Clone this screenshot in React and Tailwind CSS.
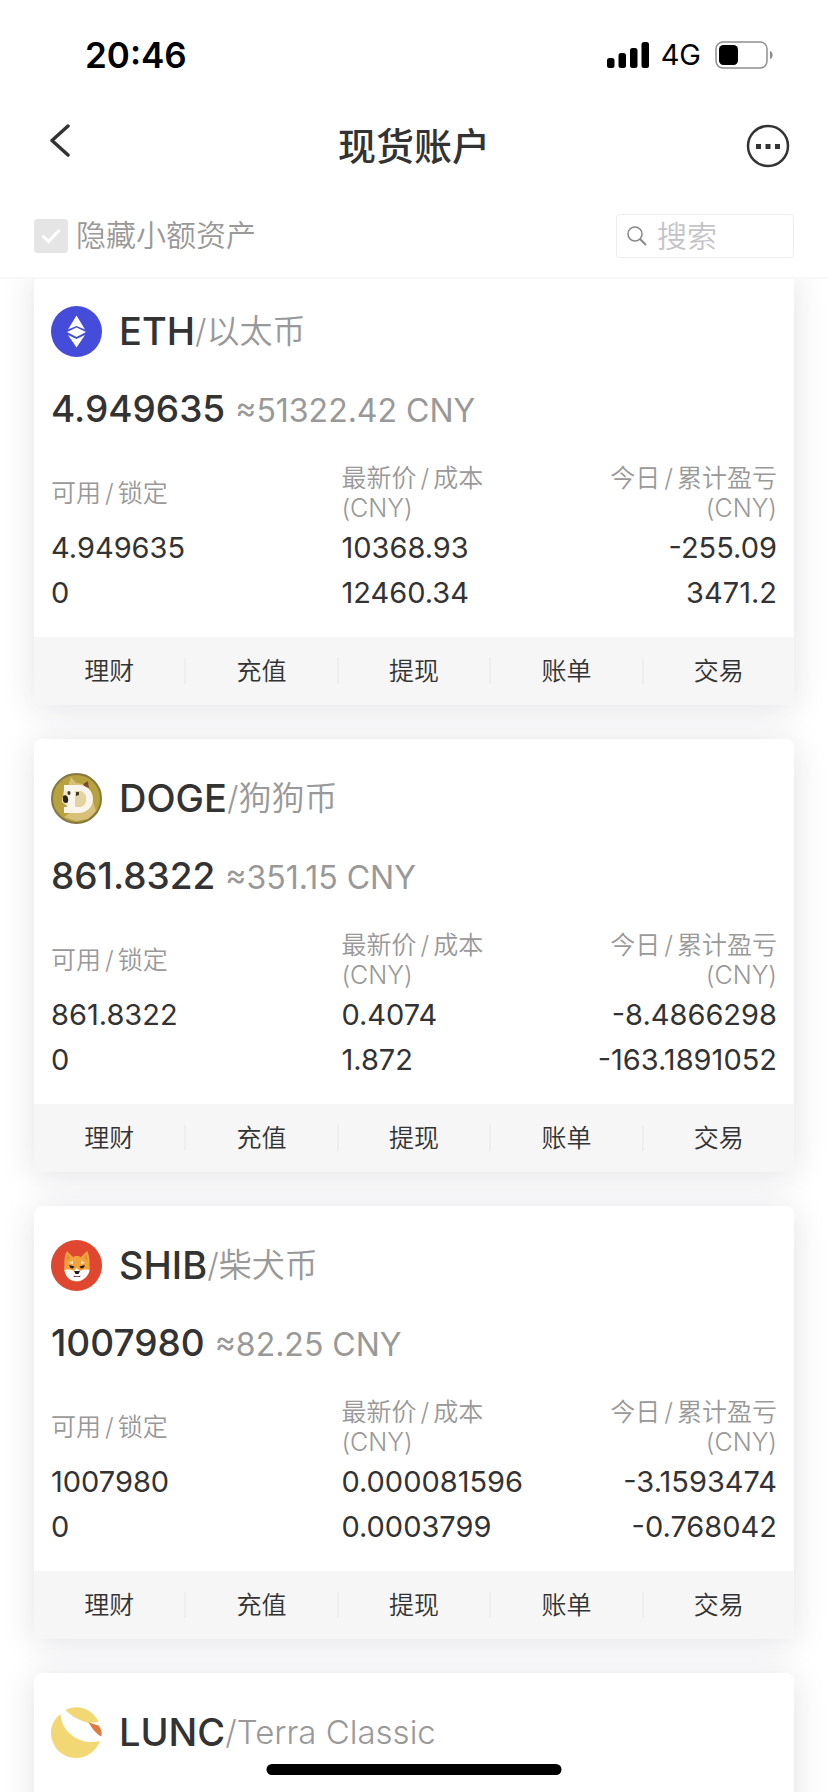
import { useState } from "react";

const coins = [
  {
    symbol: "ETH",
    name: "以太币",
    amount: "4.949635",
    worth: "51322.42",
    rows: [
      ["4.949635", "10368.93", "-255.09"],
      ["0", "12460.34", "3471.2"],
    ],
  },
  {
    symbol: "DOGE",
    name: "狗狗币",
    amount: "861.8322",
    worth: "351.15",
    rows: [
      ["861.8322", "0.4074", "-8.4866298"],
      ["0", "1.872", "-163.1891052"],
    ],
  },
  {
    symbol: "SHIB",
    name: "柴犬币",
    amount: "1007980",
    worth: "82.25",
    rows: [
      ["1007980", "0.000081596", "-3.1593474"],
      ["0", "0.0003799", "-0.768042"],
    ],
  },
  { symbol: "LUNC", name: "Terra Classic" },
];

const actions = ["理财", "充值", "提现", "账单", "交易"];

function EthIcon() {
  return (
    <svg viewBox="0 0 51 51" className="size-[51px]" aria-hidden="true">
      <circle cx="25.5" cy="25.5" r="25.5" fill="#444cd9" />
      <path d="M25.5 9.500 34 23.500 25.500 20 17 23.500Z" fill="#fff" />
      <path d="M25.5 21.500 35 26 25.500 31 16 26Z" fill="#fff" />
      <path d="M17 29 25.500 33 34 29 25.500 41.500Z" fill="#fff" />
    </svg>
  );
}

function DogeIcon() {
  return (
    <svg viewBox="0 0 51 51" className="size-[51px]" aria-hidden="true">
      <circle cx="25.5" cy="25.5" r="24.5" fill="#b8a23f" stroke="#84783f" strokeWidth="2" />
      <path d="M17 13 20 4 25 10 32 11 37 8 38 17 42 28 45 38 37 46 25 48 13 44 20 39Z" fill="#d8c078" />
      <path d="M32 11 37 8 38 15 34 14Z" fill="#7a4a2c" />
      <path d="M13 17 18 12 27 12V40H14L16 33 11 29Z" fill="#f0e6cf" />
      {/* letter-shaped coin mark */}
      <path
        fillRule="evenodd"
        d="M13 12H27C36 12 42 18 42 26S36 40 27 40H13V34H17V18H13ZM24 18V34H27C32 34 35 31 35 26S32 18 27 18Z"
        fill="#f9f5ea"
      />
      <path d="M24 18H27C32 18 35 21 35 26S32 34 27 34H24Z" fill="#e2d3a2" />
      <path d="M12 23C15 21 18 24 17 29 15 31 12 30 12 27Z" fill="#2c2419" />
      <ellipse cx="18" cy="20" rx="1.500" ry="2" fill="#3d301d" />
      <path d="M25 19H28V22L25 23Z" fill="#4a3b22" />
    </svg>
  );
}

function ShibIcon() {
  return (
    <svg viewBox="0 0 51 51" className="size-[51px]" aria-hidden="true">
      <circle cx="25.5" cy="25.5" r="25.5" fill="#df4730" />
      <path d="M16 11 22 17C24 15.500 28 15.500 30 17L36 11C38 14 39 19 38.500 25 40 32 36 37 31 40 28 42 24 42 21 40 15 37 12 32 13.500 25 13 19 14 14 16 11Z" fill="#f2a33c" />
      <path d="M16.500 14 19 18 15.500 21ZM35.500 14 33 18 36.500 21Z" fill="#e58a3c" />
      <path d="M13.500 30C17 29 21 30 23 31L25.500 28 29 31C31 30 35 29 38.500 30 38 35 34 39 30 40.500 27 41.500 24 41.500 21 40.500 17 39 14 35 13.500 30Z" fill="#fff" />
      <path d="M18 23 22 20.500 22 24ZM34 23 30 20.500 30 24Z" fill="#fdeccb" />
      <path d="M18 25 23.500 26.500 22 28.500 19.500 28ZM34 25 28.500 26.500 30 28.500 32.500 28Z" fill="#241c1a" />
      <path d="M23 31H29L27.500 34H24.500Z" fill="#241c1a" />
      <path d="M22.500 35.500C24 36.500 28 36.500 29.500 35.500L29 37H23Z" fill="#5a2a32" />
    </svg>
  );
}

function LuncIcon() {
  return (
    <svg viewBox="0 0 51 51" className="size-[51px]" aria-hidden="true">
      <path d="M14.500 3C26-3 41 1 47.500 15L38 16C29 14 20 9 14.500 3Z" fill="#f2d875" />
      <path d="M9.500 7C10 19 18 28 27 32 35 36 42 35.500 49 34 45 44 36 51 25.500 51 11 51 0 40 0 25.500 0 18 4 11 9.500 7Z" fill="#f2d875" />
      <path d="M37.500 15.500 47.500 18.500C50.500 22 51 26 50.500 29.500 45 27 41 21 37.500 15.500Z" fill="#e07a3f" />
    </svg>
  );
}

const icons = { ETH: EthIcon, DOGE: DogeIcon, SHIB: ShibIcon, LUNC: LuncIcon };

function StatusBar() {
  return (
    <div className="flex h-[110px] items-center justify-between pr-[55px] pl-[85px] text-black">
      <span className="text-[35px] font-semibold">20:46</span>
      <div className="flex items-center">
        <svg viewBox="0 0 42 26" className="h-[26px] w-[42px]" aria-hidden="true">
          <rect x="0" y="16" width="7.500" height="10" rx="2.500" />
          <rect x="11.500" y="11" width="7.500" height="15" rx="2.500" />
          <rect x="23" y="6" width="7.500" height="20" rx="2.500" />
          <rect x="34.500" y="0" width="7.500" height="26" rx="2.500" />
        </svg>
        <span className="mr-3.5 ml-3 text-[29px]">4G</span>
        <svg viewBox="0 0 58 28" className="h-7 w-[58px]" aria-hidden="true">
          <rect x="1" y="1" width="51" height="26" rx="7" fill="none" stroke="#8e8e8e" strokeWidth="1.500" />
          <rect x="4" y="4" width="19" height="20" rx="4.500" />
          <path d="M55 10C58.500 11 58.500 17 55 18Z" fill="#8e8e8e" />
        </svg>
      </div>
    </div>
  );
}

function PairLabel({ left, right }) {
  return (
    <>
      {left}
      <span className="mx-1">/</span>
      {right}
    </>
  );
}

function CoinCard({ coin }) {
  const Icon = icons[coin.symbol];

  return (
    <section className="rounded-lg bg-white shadow-[0_4px_34px_rgba(30,30,70,0.13)]">
      <div className="px-[17px] pt-[34px] pb-[22px]">
        <h2 className="flex h-[51px] items-center">
          <Icon />
          <span className="ml-[17px] text-[38px] font-medium">{coin.symbol}</span>
          <span className="text-[33px] font-[350] text-[#999]">/{coin.name}</span>
        </h2>

        {coin.rows && (
          <>
            <p className="mt-6 flex h-14 items-baseline gap-2.5 leading-[56px]">
              <span className="text-[37px] font-medium">{coin.amount}</span>
              <span className="text-[32px] text-[#999]">≈{coin.worth} CNY</span>
            </p>

            <table className="mt-[26px] w-full table-fixed">
              <thead className="text-[25px] leading-[30px] text-[#999]">
                <tr>
                  <th className="w-2/5 p-0 pb-0.5 text-left font-[350]">
                    <PairLabel left="可用" right="锁定" />
                  </th>
                  <th className="w-1/4 p-0 pb-0.5 text-left font-[350]">
                    <PairLabel left="最新价" right="成本" />
                    <br />
                    (CNY)
                  </th>
                  <th className="p-0 pb-0.5 text-right font-[350]">
                    <PairLabel left="今日" right="累计盈亏" />
                    <br />
                    (CNY)
                  </th>
                </tr>
              </thead>
              <tbody className="text-[29px] leading-[45px]">
                {coin.rows.map((row, i) => (
                  <tr key={i}>
                    <td className="p-0">{row[0]}</td>
                    <td className="p-0">{row[1]}</td>
                    <td className="p-0 text-right">{row[2]}</td>
                  </tr>
                ))}
              </tbody>
            </table>
          </>
        )}
      </div>

      {coin.rows ? (
        <div className="flex h-[68px] items-center divide-x-2 divide-[#eeeeef] rounded-b-lg bg-[#f6f6f7]">
          {actions.map((label) => (
            <button key={label} type="button" className="h-[26px] flex-1 text-[25px] leading-[26px] font-[350]">
              {label}
            </button>
          ))}
        </div>
      ) : (
        <div className="h-[68px]" />
      )}
    </section>
  );
}

export default function App() {
  const [hideSmall, setHideSmall] = useState(true);
  const [query, setQuery] = useState("");

  const visible = coins.filter((c) =>
    (c.symbol + c.name).toLowerCase().includes(query.toLowerCase())
  );

  return (
    <div className="relative flex h-screen flex-col overflow-hidden bg-white font-[Inter,'Noto_Sans_CJK_SC',sans-serif] text-[#333]">
      <header className="border-b-2 border-[#f8f8fb]">
        <StatusBar />

        {/* nav */}
        <div className="grid h-[72px] grid-cols-[1fr_auto_1fr] items-center px-[38px]">
          <button type="button" aria-label="返回" className="justify-self-start px-3 pb-3">
            <svg viewBox="0 0 20 34" className="h-[34px] w-5" fill="none" stroke="#333" strokeWidth="3.500" strokeLinecap="round" strokeLinejoin="round">
              <path d="M18 3 2 17.500 18 32" />
            </svg>
          </button>
          <h1 className="text-[38px] font-medium">现货账户</h1>
          <button type="button" aria-label="更多" className="justify-self-end">
            <svg viewBox="0 0 44 44" className="size-11" fill="#333">
              <circle cx="22" cy="22" r="20" fill="none" stroke="#333" strokeWidth="2.500" />
              <rect x="10" y="20" width="5" height="5" />
              <rect x="19.500" y="20" width="5" height="5" />
              <rect x="29" y="20" width="5" height="5" />
            </svg>
          </button>
        </div>

        {/* filters */}
        <div className="mt-3 flex h-[83px] items-center justify-between px-[34px]">
          <label className="flex items-center gap-2 text-[30px] font-[350] text-[#999]">
            <span className="grid size-[34px] place-items-center">
              <input
                type="checkbox"
                className="peer col-start-1 row-start-1 size-[34px] appearance-none rounded-sm bg-[#e5e5e5]"
                checked={hideSmall}
                onChange={(e) => setHideSmall(e.target.checked)}
              />
              <svg viewBox="0 0 20 16" className="pointer-events-none invisible col-start-1 row-start-1 h-4 w-5 peer-checked:visible" fill="none" stroke="#fff" strokeWidth="3">
                <path d="M1.500 7.500 7.500 13.500 18.500 2" />
              </svg>
            </span>
            隐藏小额资产
          </label>

          <label className="flex h-11 w-[178px] items-center rounded-sm border border-[#ededed] pl-2.5">
            <svg viewBox="0 0 20 20" className="size-5 shrink-0" fill="none" stroke="#888" strokeWidth="1.500">
              <circle cx="8" cy="8" r="7" />
              <path d="M13 13 19 19" strokeWidth="2" />
            </svg>
            <input
              type="text"
              aria-label="搜索"
              placeholder="搜索"
              className="ml-2.5 h-full w-full min-w-0 text-[30px] font-[350] outline-none placeholder:text-[#c4c4c8]"
              value={query}
              onChange={(e) => setQuery(e.target.value)}
            />
          </label>
        </div>
      </header>

      <main className="flex-1 overflow-y-auto [scrollbar-width:none]">
        <div className="-mt-[7px] flex flex-col gap-[34px] px-[34px]">
          {visible.map((c) => (
            <CoinCard key={c.symbol} coin={c} />
          ))}
        </div>
      </main>

      {/* home indicator */}
      <div className="absolute bottom-[17px] left-1/2 h-[11px] w-[295px] -translate-x-1/2 rounded-full bg-black" />
    </div>
  );
}
